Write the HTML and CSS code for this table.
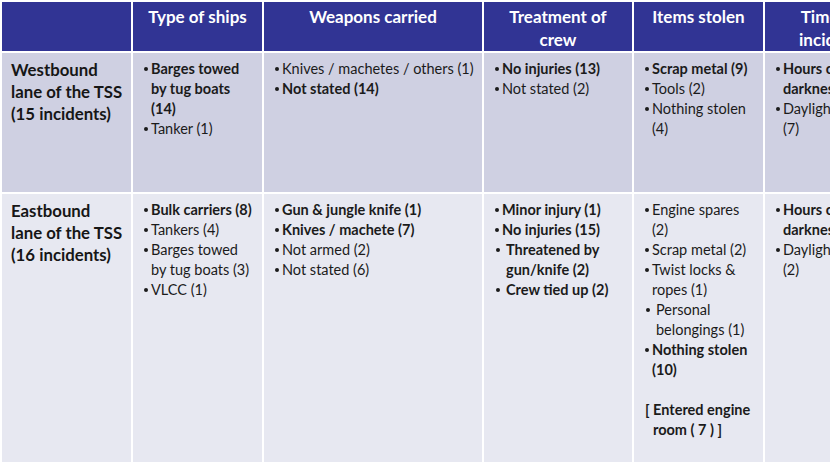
FILE: index.html
```html
<!DOCTYPE html>
<html>
<head>
<meta charset="utf-8">
<link rel="stylesheet" href="styles.css">
</head>
<body>
<div class="table">
  <div class="hd"></div>
  <div class="hd">Type of ships</div>
  <div class="hd">Weapons carried</div>
  <div class="hd">Treatment of crew</div>
  <div class="hd">Items stolen</div>
  <div class="hd">Time of incident</div>

  <div class="cell odd lane">Westbound lane of the TSS (15 incidents)</div>
  <div class="cell odd">
    <ul>
      <li class="b">Barges towed by tug boats (14)</li>
      <li>Tanker (1)</li>
    </ul>
  </div>
  <div class="cell odd">
    <ul>
      <li>Knives / machetes / others (1)</li>
      <li class="b">Not stated (14)</li>
    </ul>
  </div>
  <div class="cell odd">
    <ul>
      <li class="b">No injuries (13)</li>
      <li>Not stated (2)</li>
    </ul>
  </div>
  <div class="cell odd">
    <ul>
      <li class="b">Scrap metal (9)</li>
      <li>Tools (2)</li>
      <li>Nothing stolen (4)</li>
    </ul>
  </div>
  <div class="cell odd">
    <ul>
      <li class="b">Hours of darkness (8)</li>
      <li>Daylight hours (7)</li>
    </ul>
  </div>

  <div class="cell even lane">Eastbound lane of the TSS (16 incidents)</div>
  <div class="cell even">
    <ul>
      <li class="b">Bulk carriers (8)</li>
      <li>Tankers (4)</li>
      <li>Barges towed by tug boats (3)</li>
      <li>VLCC (1)</li>
    </ul>
  </div>
  <div class="cell even">
    <ul>
      <li class="b">Gun &amp; jungle knife (1)</li>
      <li class="b">Knives / machete (7)</li>
      <li>Not armed (2)</li>
      <li>Not stated (6)</li>
    </ul>
  </div>
  <div class="cell even">
    <ul>
      <li class="b">Minor injury (1)</li>
      <li class="b">No injuries (15)</li>
      <li class="b sp">Threatened by gun/knife (2)</li>
      <li class="b sp">Crew tied up (2)</li>
    </ul>
  </div>
  <div class="cell even">
    <ul>
      <li>Engine spares (2)</li>
      <li>Scrap metal (2)</li>
      <li>Twist locks &amp; ropes (1)</li>
      <li class="sp">Personal belongings (1)</li>
      <li class="b">Nothing stolen (10)</li>
    </ul>
    <p class="note">[ Entered engine room ( 7 ) ]</p>
  </div>
  <div class="cell even">
    <ul>
      <li class="b">Hours of darkness (14)</li>
      <li>Daylight hours (2)</li>
    </ul>
  </div>
</div>
</body>
</html>
```
FILE: styles.css
```css
html, body {
  margin: 0;
  padding: 0;
  background: #ffffff;
  overflow: hidden;
  width: 830px;
  height: 468px;
}
body {
  font-family: Lato, "Open Sans", sans-serif;
  color: #1b1b1b;
}
.table {
  display: grid;
  grid-template-columns: 129px 129px 218px 148px 129px 129px;
  grid-template-rows: 49px 139px 268px;
  gap: 2px;
  padding: 2px;
  width: max-content;
}
.hd {
  background: #313494;
  color: #ffffff;
  font-weight: 700;
  font-size: 17px;
  line-height: 23px;
  text-align: center;
  padding: 3px 8px 0;
}
.cell {
  padding: 6px 8px 0 11px;
  font-size: 14.5px;
  line-height: 20px;
}
.odd { background: #cfd0e2; }
.even { background: #e7e8f1; }
.lane {
  font-size: 16.8px;
  line-height: 22px;
  font-weight: 700;
  padding: 6px 6px 0 9px;
  color: #161616;
}
ul {
  list-style: none;
  margin: 0;
  padding: 0;
}
li {
  position: relative;
  padding-left: 7px;
}
li::before {
  content: "";
  position: absolute;
  left: 0;
  top: 8px;
  width: 4px;
  height: 4px;
  border-radius: 50%;
  background: #1b1b1b;
}
li.sp {
  padding-left: 11px;
}
li.sp::before {
  left: 1px;
}
.b { font-weight: 700; }
.note {
  margin: 20px 0 0 0;
  font-weight: 700;
  padding-left: 8px;
  text-indent: -8px;
}
```
